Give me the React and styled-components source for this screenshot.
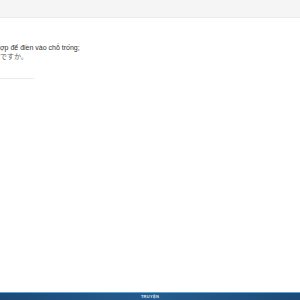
import styled, { createGlobalStyle } from 'styled-components';

const GlobalStyle = createGlobalStyle`
  html, body { margin: 0; padding: 0; height: 100%; }
  body { background: #ffffff; font-family: "Liberation Sans", Arial, sans-serif; }
  #root { height: 100%; }
`;

const Page = styled.div`
  height: 300px;
  display: flex;
  flex-direction: column;
  overflow: hidden;
`;

const Header = styled.header`
  height: 17px;
  background: #f5f5f5;
  border-bottom: 1px solid #ececec;
  flex-shrink: 0;
`;

const Main = styled.main`
  flex: 1;
  padding-top: 25px;
`;

const Question = styled.div`
  padding-bottom: 17px;
`;

const Prompt = styled.p`
  margin: 0;
  font-size: 7px;
  line-height: 9px;
  color: ${({ $muted }) => ($muted ? '#666' : '#333')};
  font-family: "Liberation Sans", "Noto Sans CJK JP", sans-serif;
  white-space: nowrap;
`;

const Divider = styled.hr`
  margin: 0;
  width: 34px;
  height: 0;
  border: 0;
  border-top: 1px solid #ececec;
`;

const Footer = styled.footer`
  height: 7px;
  flex-shrink: 0;
  background: linear-gradient(90deg, #1d4a78 0%, #245c8c 50%, #1d4a78 100%);
  border-top: 1px solid #5aa6d6;
  display: flex;
  align-items: center;
  justify-content: center;
`;

const FooterText = styled.span`
  font-size: 4px;
  font-weight: bold;
  color: #dfe9f3;
  letter-spacing: 0.3px;
`;

export default function App() {
  return (
    <>
      <GlobalStyle />
      <Page>
        <Header />
        <Main>
          <Question>
            <Prompt>ợp để điền vào chỗ trống;</Prompt>
            <Prompt $muted>ですか。</Prompt>
          </Question>
          <Divider />
        </Main>
        <Footer>
          <FooterText>TRUYỆN</FooterText>
        </Footer>
      </Page>
    </>
  );
}
